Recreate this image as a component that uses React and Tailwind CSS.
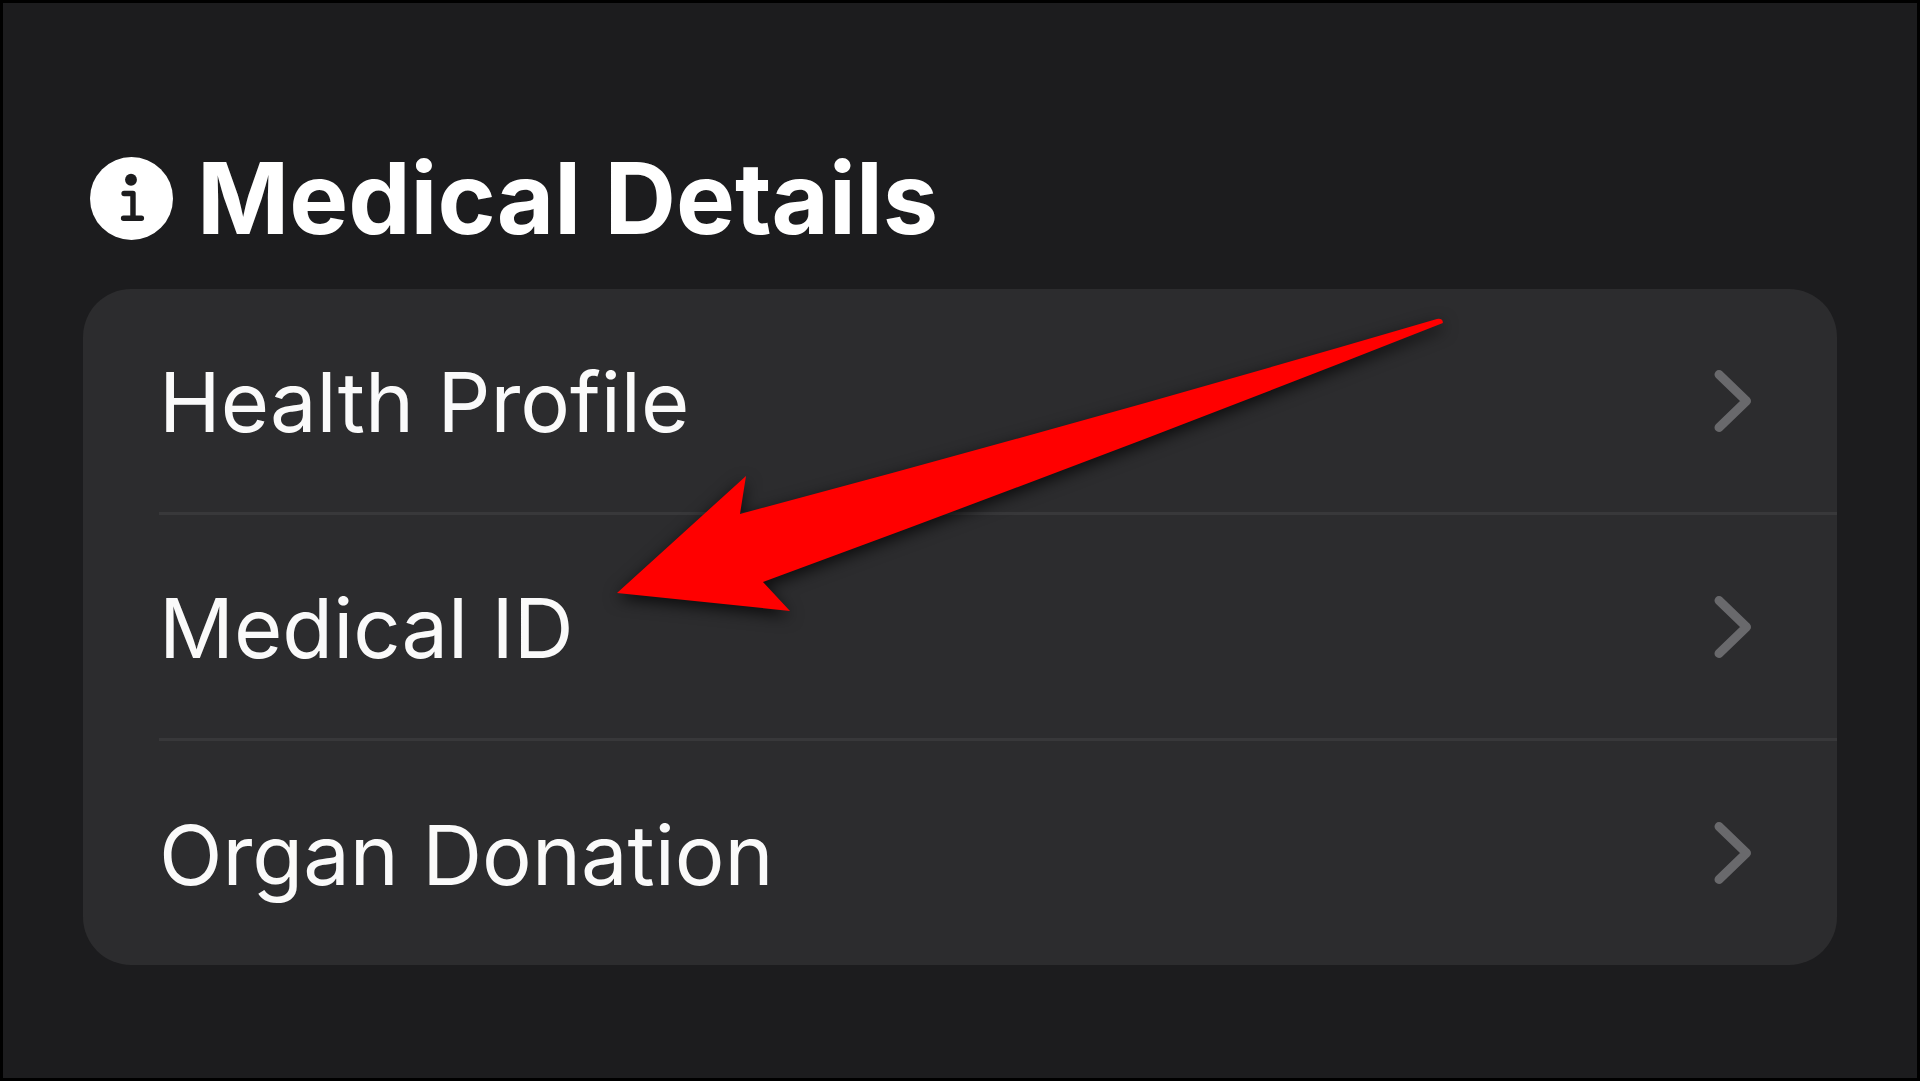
import React from 'react';

const items = [
  { id: 'health-profile', label: 'Health Profile' },
  { id: 'medical-id', label: 'Medical ID' },
  { id: 'organ-donation', label: 'Organ Donation' },
];

const InfoIcon = () => (
  <svg viewBox="0 0 84 84" className="w-[83px] h-[83px] shrink-0" aria-hidden="true">
    <circle cx="42" cy="42" r="42" fill="#fff" />
    <circle cx="41.5" cy="23" r="6" fill="#1c1c1e" />
    <path
      d="M34.5 37H43.5V62M34 62H52"
      fill="none"
      stroke="#1c1c1e"
      strokeWidth="5.5"
      strokeLinecap="round"
      strokeLinejoin="round"
    />
  </svg>
);

const Chevron = () => (
  <svg viewBox="0 0 40 64" className="w-10 h-16 shrink-0" aria-hidden="true">
    <path
      d="M6 5.5L33.5 32L6 58.5"
      fill="none"
      stroke="#69696c"
      strokeWidth="9"
      strokeLinecap="round"
      strokeLinejoin="round"
    />
  </svg>
);

const Arrow = () => (
  <svg
    viewBox="0 0 842 316"
    className="absolute top-5 left-[30%] w-[48%] overflow-visible pointer-events-none drop-shadow-[0_5px_8px_rgba(0,0,0,0.75)]"
    aria-hidden="true"
  >
    <path
      d="M8 284L137 167L131 205Q480 112 828 10Q834 9 834 14Q500 146 154 273L181 302Z"
      fill="#ff0000"
    />
  </svg>
);

const App = () => {
  return (
    <main className="min-h-screen bg-[#1c1c1e] border-3 border-black px-20 pt-36 pb-28 font-['Inter',sans-serif]">
      <h1 className="flex items-center gap-6 ml-[7px] text-white text-[99px] leading-[102px] font-bold">
        <InfoIcon />
        Medical Details
      </h1>

      <nav className="relative mt-10 bg-[#2c2c2e] rounded-[48px]">
        <ul>
          {items.map((item) => (
            <li key={item.id} className="group pl-19">
              <a
                href={`#${item.id}`}
                className="flex items-center justify-between h-[226px] pr-21 border-b-3 border-[#38383a] 
                           group-last:h-56 group-last:border-b-0 text-[#fafafa] text-[83px] leading-none"
              >
                <span className="pt-1">{item.label}</span>
                <Chevron />
              </a>
            </li>
          ))}
        </ul>
        <Arrow />
      </nav>
    </main>
  );
};

export default App;
